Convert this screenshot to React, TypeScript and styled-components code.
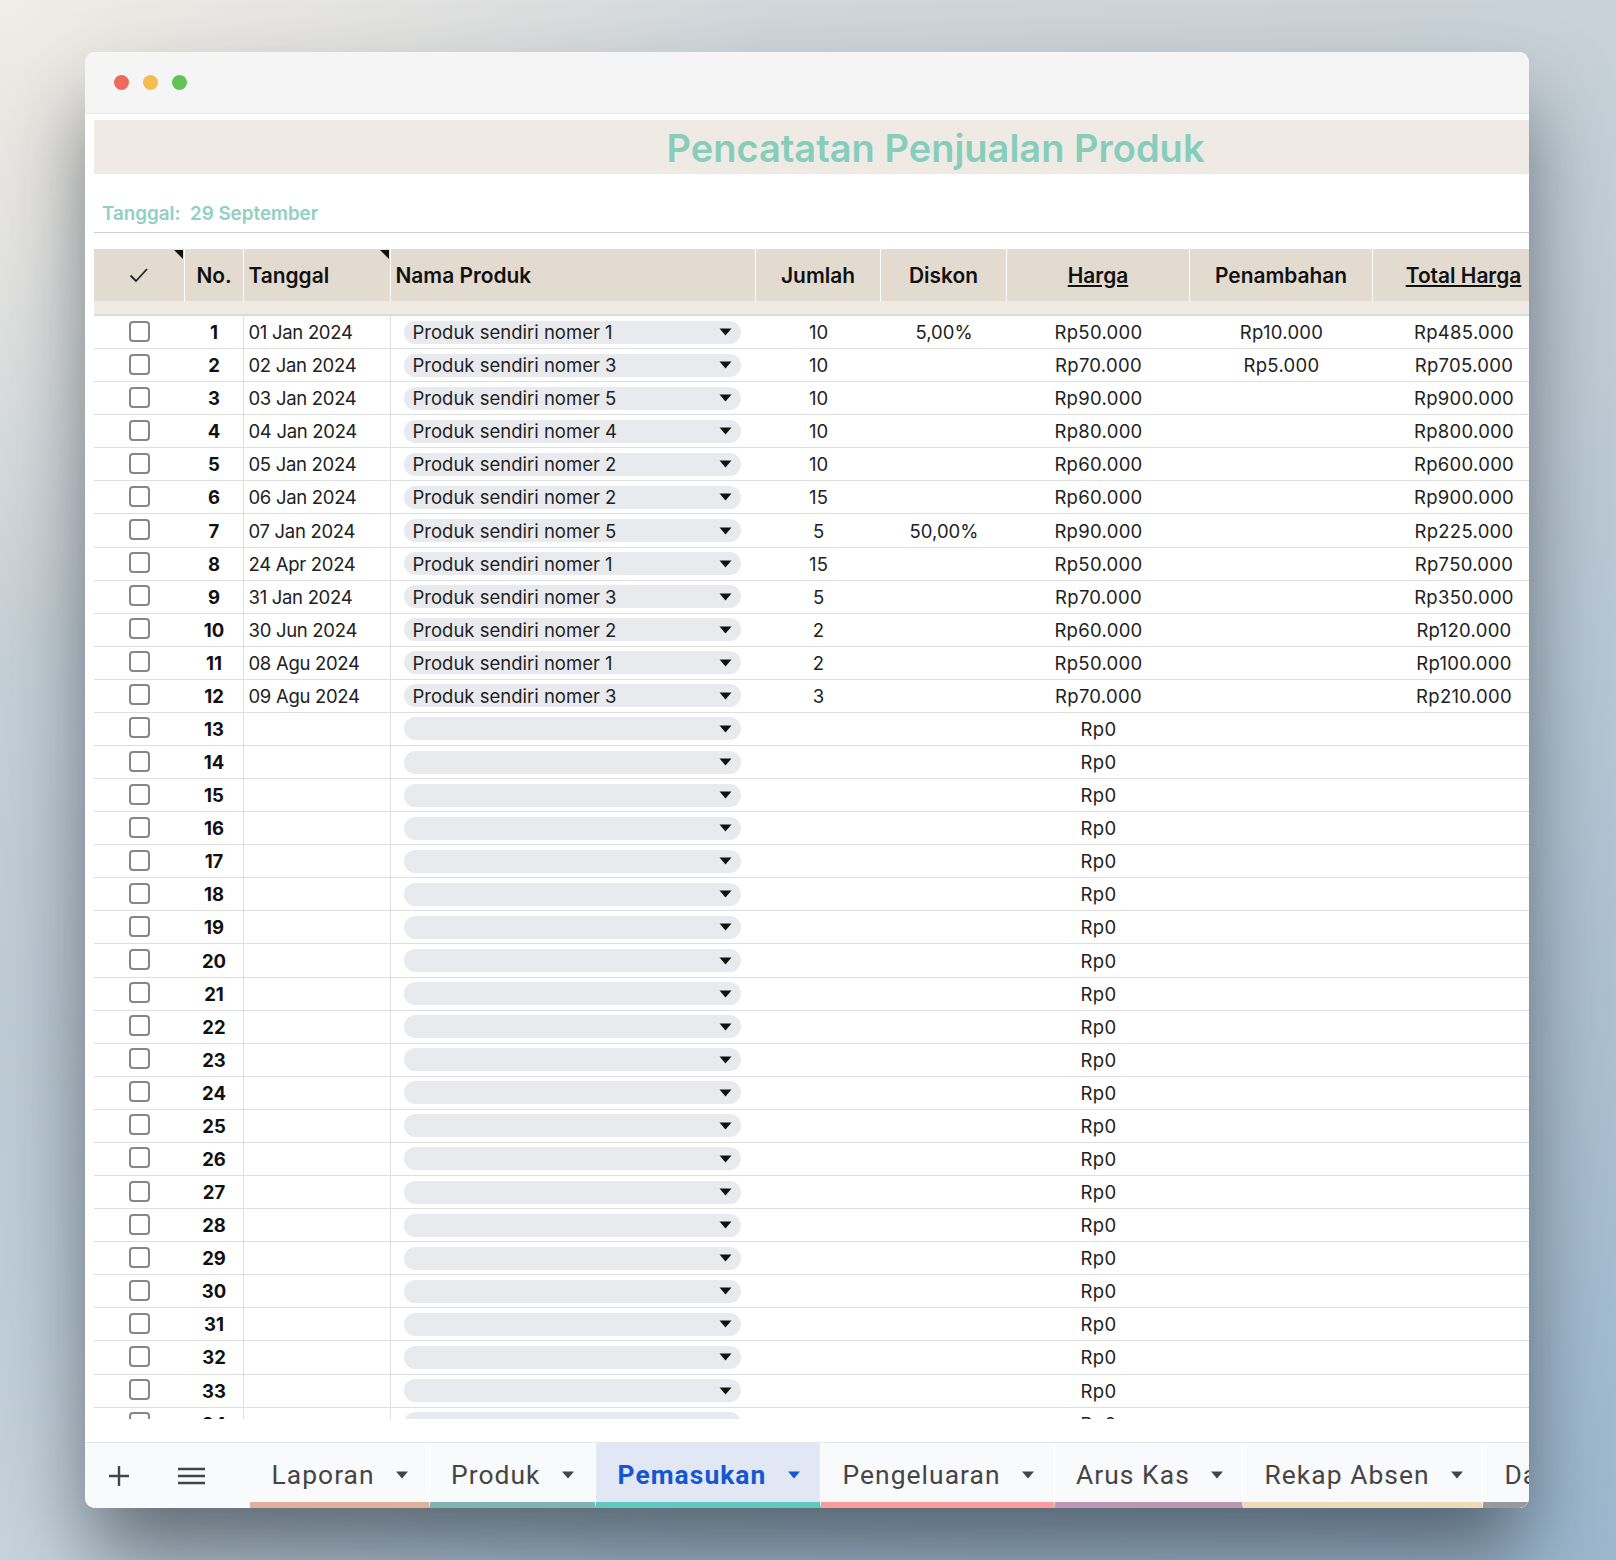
import React from "react";
import styled, { createGlobalStyle } from "styled-components";

const Global = createGlobalStyle`
  html, body { margin: 0; padding: 0; }
  body { font-family: "Inter", "Liberation Sans", sans-serif; color: #1f1f1f; }
`;

const COLUMNS = "91px 59px 147px 365px 125px 126px 183px 183px 182px";

const Page = styled.div`
  width: 1616px;
  height: 1560px;
  box-sizing: border-box;
  padding: 52px 0 0 85px;
  overflow: hidden;
  background:
    radial-gradient(1100px 900px at 0% 0%, #f0ece6 0%, rgba(240, 236, 230, 0) 70%),
    radial-gradient(900px 800px at 0% 100%, #c8d4dd 0%, rgba(200, 212, 221, 0) 75%),
    linear-gradient(160deg, #d8dbdc 0%, #b9c8d4 55%, #9db8cf 100%);
`;

const Window = styled.div`
  width: 1444px;
  height: 1456px;
  display: flex;
  flex-direction: column;
  border-radius: 10px;
  overflow: hidden;
  background: #fff;
  box-shadow: 0 50px 85px -5px rgba(40, 50, 60, 0.65);
`;

const TitleBar = styled.div`
  flex: none;
  height: 62px;
  box-sizing: border-box;
  border-bottom: 1.5px solid #e8e8e8;
  background: #f5f5f5;
  display: flex;
  align-items: center;
  gap: 14px;
  padding: 0 0 0 29px;
`;

const Dot = styled.span<{ $color: string }>`
  width: 15px;
  height: 15px;
  border-radius: 50%;
  background: ${(p) => p.$color};
`;

const Sheet = styled.div`
  flex: 1;
  min-height: 0;
  padding: 6px 0 0 9px;
  overflow: hidden;
`;

const TitleBand = styled.div`
  height: 54px;
  padding: 1px 0 0 248px;
  box-sizing: border-box;
  background: #efebe4;
  display: flex;
  align-items: center;
  justify-content: center;
  font-size: 38px;
  font-weight: 600;
  color: #86cdbc;
`;

const DateLine = styled.div`
  height: 58.5px;
  box-sizing: border-box;
  border-bottom: 1.5px solid #cfcfcf;
  padding: 28px 0 0 8px;
  font-size: 18.8px;
  line-height: 24px;
  font-weight: 600;
  color: #8fd0c1;
  white-space: pre;
`;

const TableHead = styled.div`
  margin-top: 16.5px;
  display: grid;
  grid-template-columns: ${COLUMNS};
  height: 52px;
  background: #e3dbcf;
`;

const HeadCell = styled.div<{ $left?: boolean; $note?: boolean; $link?: boolean }>`
  position: relative;
  box-sizing: border-box;
  display: flex;
  align-items: center;
  justify-content: ${(p) => (p.$left ? "flex-start" : "center")};
  padding-left: ${(p) => (p.$left ? "4.5px" : "0")};
  border-right: 1.5px solid #fff;
  font-size: 20.9px;
  font-weight: 600;
  color: #111;
  text-decoration: ${(p) => (p.$link ? "underline" : "none")};
  &::after {
    content: "";
    display: ${(p) => (p.$note ? "block" : "none")};
    position: absolute;
    top: 1px;
    right: 1px;
    border-top: 9px solid #111;
    border-left: 9px solid transparent;
  }
`;

const HeadStrip = styled.div`
  height: 13px;
  background: #efebe4;
  border-bottom: 2px solid #dcdcdc;
`;

const Body = styled.div`
  height: 1104px;
  overflow: hidden;
`;

const Row = styled.div`
  display: grid;
  grid-template-columns: ${COLUMNS};
  height: 33.09px;
  box-sizing: border-box;
  border-bottom: 1.5px solid #dedede;
`;

const Cell = styled.div<{ $left?: boolean; $bold?: boolean; $divider?: boolean; $track?: number }>`
  box-sizing: border-box;
  display: flex;
  align-items: center;
  justify-content: ${(p) => (p.$left ? "flex-start" : "center")};
  padding-left: ${(p) => (p.$left ? "4.5px" : "0")};
  border-right: ${(p) => (p.$divider ? "1.5px solid #dedede" : "none")};
  font-size: 18.5px;
  font-weight: ${(p) => (p.$bold ? 700 : 400)};
  letter-spacing: ${(p) => p.$track || 0}px;
  color: ${(p) => (p.$bold ? "#111" : "#222")};
`;

const Checkbox = styled.span`
  width: 21px;
  height: 21px;
  margin-bottom: 2px;
  box-sizing: border-box;
  border: 2.7px solid #868686;
  border-radius: 4px;
`;

const SelectCell = styled.div`
  display: flex;
  align-items: center;
  padding-left: 13px;
`;

const Select = styled.div`
  flex: none;
  width: 337px;
  height: 23px;
  padding: 0 9px 0 8.5px;
  box-sizing: border-box;
  border-radius: 12px;
  background: #e8eaed;
  display: flex;
  align-items: center;
  justify-content: space-between;
  font-size: 18.5px;
`;

const TabBar = styled.div`
  flex: none;
  height: 66px;
  margin-top: 23px;
  box-sizing: border-box;
  border-top: 1.5px solid #e6e8e6;
  background: #f9fafc;
  display: flex;
  overflow: hidden;
`;

const BarButton = styled.div<{ $w: number }>`
  flex: none;
  width: ${(p) => p.$w}px;
  display: flex;
  align-items: center;
  justify-content: center;
  color: #444;
`;

const Tabs = styled.div`
  flex: none;
  display: flex;
  margin-left: 7px;
`;

const Tab = styled.div<{ $w: number; $color: string; $active?: boolean }>`
  flex: none;
  width: ${(p) => p.$w}px;
  box-sizing: border-box;
  display: flex;
  align-items: center;
  gap: 20.5px;
  padding: 5px 0 0 21.5px;
  background: ${(p) => (p.$active ? "#e1e7f5" : "transparent")};
  border-bottom: 6px solid ${(p) => p.$color};
  border-right: 1px solid #fff;
  font-family: "Roboto", "Liberation Sans", sans-serif;
  font-size: 26.4px;
  font-weight: ${(p) => (p.$active ? 700 : 400)};
  letter-spacing: 1.05px;
  color: ${(p) => (p.$active ? "#1657d0" : "#454545")};
  white-space: nowrap;
`;

const ArrowSvg = styled.svg`
  flex: none;
`;

const Arrow = ({ color = "#111", w = 13 }: { color?: string; w?: number }) => (
  <ArrowSvg width={w} height="8" viewBox="0 0 13 8">
    <path d="M0.5 0.5h12L6.5 7.5z" fill={color} />
  </ArrowSvg>
);

const filled = [
  ["01 Jan 2024", "Produk sendiri nomer 1", "10", "5,00%", "Rp50.000", "Rp10.000", "Rp485.000"],
  ["02 Jan 2024", "Produk sendiri nomer 3", "10", "", "Rp70.000", "Rp5.000", "Rp705.000"],
  ["03 Jan 2024", "Produk sendiri nomer 5", "10", "", "Rp90.000", "", "Rp900.000"],
  ["04 Jan 2024", "Produk sendiri nomer 4", "10", "", "Rp80.000", "", "Rp800.000"],
  ["05 Jan 2024", "Produk sendiri nomer 2", "10", "", "Rp60.000", "", "Rp600.000"],
  ["06 Jan 2024", "Produk sendiri nomer 2", "15", "", "Rp60.000", "", "Rp900.000"],
  ["07 Jan 2024", "Produk sendiri nomer 5", "5", "50,00%", "Rp90.000", "", "Rp225.000"],
  ["24 Apr 2024", "Produk sendiri nomer 1", "15", "", "Rp50.000", "", "Rp750.000"],
  ["31 Jan 2024", "Produk sendiri nomer 3", "5", "", "Rp70.000", "", "Rp350.000"],
  ["30 Jun 2024", "Produk sendiri nomer 2", "2", "", "Rp60.000", "", "Rp120.000"],
  ["08 Agu 2024", "Produk sendiri nomer 1", "2", "", "Rp50.000", "", "Rp100.000"],
  ["09 Agu 2024", "Produk sendiri nomer 3", "3", "", "Rp70.000", "", "Rp210.000"],
];

const rows = Array.from({ length: 34 }, (_, i) => filled[i] || ["", "", "", "", "Rp0", "", ""]);

const tabs = [
  { name: "Laporan", w: 179.5, color: "#e0b09b" },
  { name: "Produk", w: 166.5, color: "#7fb5b0" },
  { name: "Pemasukan", w: 225, color: "#5fc9bd", active: true },
  { name: "Pengeluaran", w: 233.5, color: "#ff9b9b" },
  { name: "Arus Kas", w: 188.5, color: "#bf95b5" },
  { name: "Rekap Absen", w: 240, color: "#f0dab5" },
  { name: "Data", w: 120, color: "#999999" },
];

export default function App() {
  return (
    <Page>
      <Global />
      <Window>
        <TitleBar>
          <Dot $color="#ee6a5f" />
          <Dot $color="#f5bd4f" />
          <Dot $color="#61c454" />
        </TitleBar>
        <Sheet>
          <TitleBand>Pencatatan Penjualan Produk</TitleBand>
          <DateLine>Tanggal:  29 September</DateLine>
          <TableHead>
            <HeadCell $note>
              <svg width="20" height="16" viewBox="0 0 20 16">
                <path d="M1.5 8.5l5.5 5.5L18 2" fill="none" stroke="#222" strokeWidth="1.8" />
              </svg>
            </HeadCell>
            <HeadCell>No.</HeadCell>
            <HeadCell $left $note>Tanggal</HeadCell>
            <HeadCell $left>Nama Produk</HeadCell>
            <HeadCell>Jumlah</HeadCell>
            <HeadCell>Diskon</HeadCell>
            <HeadCell $link>Harga</HeadCell>
            <HeadCell>Penambahan</HeadCell>
            <HeadCell $link>Total Harga</HeadCell>
          </TableHead>
          <HeadStrip />
          <Body>
            {rows.map((r, i) => (
              <Row key={i}>
                <Cell><Checkbox /></Cell>
                <Cell $bold $divider>{i + 1}</Cell>
                <Cell $left $divider $track={-0.3}>{r[0]}</Cell>
                <SelectCell>
                  <Select>
                    <span>{r[1]}</span>
                    <Arrow />
                  </Select>
                </SelectCell>
                <Cell>{r[2]}</Cell>
                <Cell>{r[3]}</Cell>
                <Cell $track={0.3}>{r[4]}</Cell>
                <Cell $track={0.3}>{r[5]}</Cell>
                <Cell $track={0.3}>{r[6]}</Cell>
              </Row>
            ))}
          </Body>
        </Sheet>
        <TabBar>
          <BarButton $w={68}>
            <svg width="20" height="20" viewBox="0 0 20 20">
              <path d="M10 0v20M0 10h20" stroke="#444" strokeWidth="2.4" />
            </svg>
          </BarButton>
          <BarButton $w={76}>
            <svg width="27" height="18" viewBox="0 0 27 18">
              <path d="M0 2h27M0 9h27M0 16h27" stroke="#444" strokeWidth="2.6" />
            </svg>
          </BarButton>
          <Tabs>
            <BarButton $w={14} />
            {tabs.map((t) => (
              <Tab key={t.name} $w={t.w} $color={t.color} $active={t.active}>
                {t.name}
                <Arrow color={t.active ? "#1657d0" : "#444"} w={14} />
              </Tab>
            ))}
          </Tabs>
        </TabBar>
      </Window>
    </Page>
  );
}
